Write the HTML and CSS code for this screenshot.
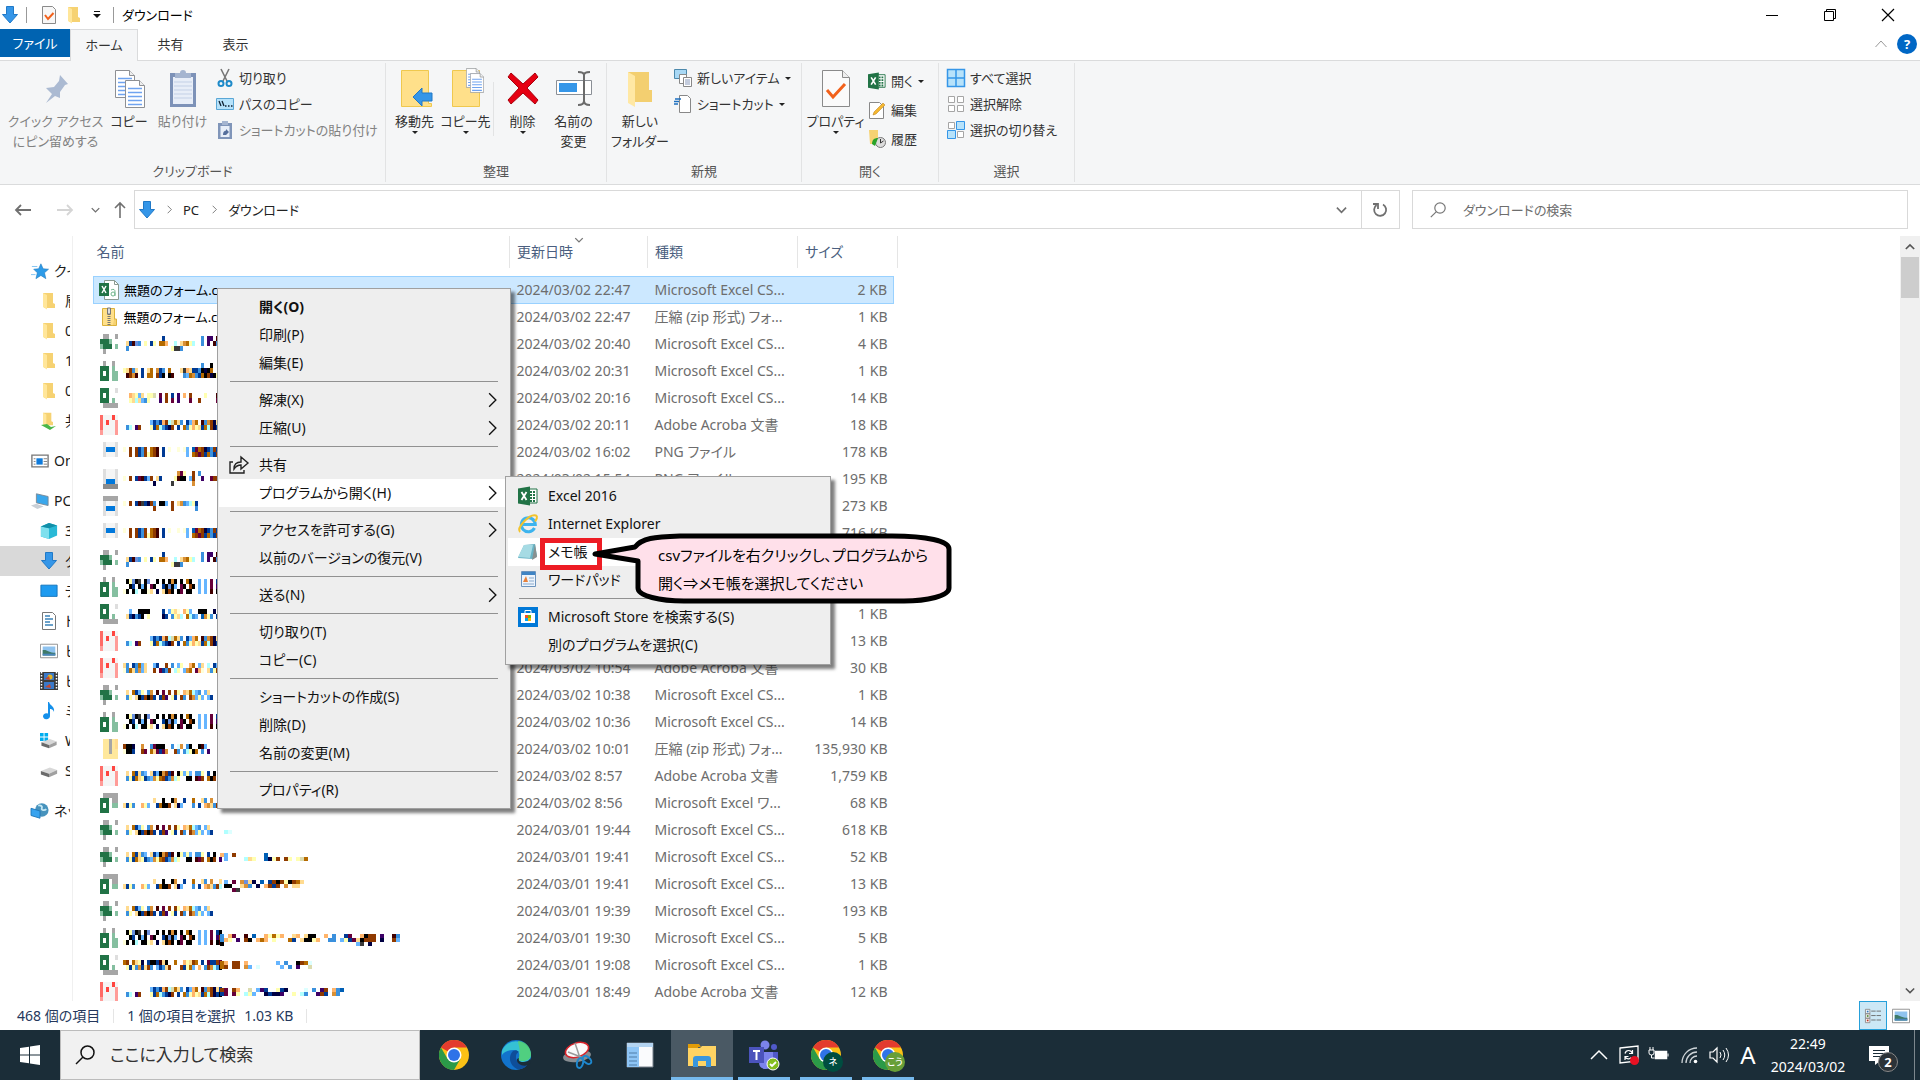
FILE: index.html
```html
<!DOCTYPE html>
<html lang="ja">
<head>
<meta charset="utf-8">
<meta name="viewport" content="width=device-width, initial-scale=1">
<title>ダウンロード</title>
<link rel="stylesheet" href="styles.css">
</head>
<body>
<svg class="defs" aria-hidden="true">
  <symbol id="i-down" viewBox="0 0 16 18"><path d="M4.5.5h7v8h4L8 17 .5 8.500h4z" fill="#3596e8" stroke="#2079c7"/></symbol>
  <symbol id="i-folder" viewBox="0 0 14 18"><path d="M1 1h10v10l2 1v4H2z" fill="#f6d272"/><path d="M1 1l4 2v14.500L1 15z" fill="#ffe69a"/></symbol>
  <symbol id="i-check" viewBox="0 0 14 18"><path d="M.5.500h10l3 3v14H.5z" fill="#f7f7f7" stroke="#8a8a8a"/><path d="M3 9l3 4 5.500-6" fill="none" stroke="#f2611b" stroke-width="2"/></symbol>
  <symbol id="i-page" viewBox="0 0 20 28"><path d="M.5.500h14l5 5v22H.5z" fill="#fff" stroke="#8e9094"/><path d="M14.500.500v5h5" fill="#eee" stroke="#8e9094"/><path d="M3 8.500h14M3 12.500h14M3 16.500h14M3 20.500h14M3 24.500h14" stroke="#6fa3f0" stroke-width="1.500"/></symbol>
  <symbol id="i-excel" viewBox="0 0 20 20"><path d="M10 3h9v14h-9z" fill="#fff" stroke="#217346"/><path d="M12 6h5M12 9h5M12 12h5M12 15h5" stroke="#217346" stroke-width="2" stroke-dasharray="2 1"/><path d="M0 2.500L12 .500v19L0 17.500z" fill="#217346"/><path d="M3.500 6l5 8M8.500 6l-5 8" stroke="#fff" stroke-width="1.800"/></symbol>
  <symbol id="i-picture" viewBox="0 0 20 16"><path d="M.5.500h19v15H.5z" fill="#fff" stroke="#8a8a8a"/><path d="M3 3h14v10H3z" fill="#8fc3ef"/><path d="M3 7c5-1 7 3 14 3v3H3z" fill="#3f7a68"/><path d="M3 11h14v2H3z" fill="#4c86bd"/></symbol>
  <symbol id="i-drive" viewBox="0 0 20 16"><path d="M1 8l10-4 8 3-9 4z" fill="#d8d8d8"/><path d="M1 8l9 3v4L1 12z" fill="#6b6b6b"/><path d="M10 11l9-4v4l-9 4z" fill="#a0a0a0"/></symbol>
  <symbol id="i-chrome" viewBox="0 0 30 30"><circle cx="15" cy="15" r="15" fill="#fbc116"/><path d="M15 15L2 7.500A15 15 0 0 1 28 7.500H15z" fill="#e33b2e"/><path d="M2 7.500A15 15 0 0 0 15 30l6.500-11.200L8.500 18.700z" fill="#2b9a48"/><circle cx="15" cy="15" r="7.500" fill="#fff"/><circle cx="15" cy="15" r="6" fill="#2f73e8"/></symbol>
  <symbol id="i-right" viewBox="0 0 8 14"><path d="M1 1l6 6-6 6" fill="none" stroke="currentColor" stroke-width="1.200"/></symbol>
  <symbol id="i-chev" viewBox="0 0 12 8"><path d="M1 1.500l5 5 5-5" fill="none" stroke="currentColor" stroke-width="1.800"/></symbol>
  <symbol id="i-caret" viewBox="0 0 6 3"><path d="M0 0h6L3 3z" fill="#222"/></symbol>
  <symbol id="i-search" viewBox="0 0 20 20"><circle cx="12.500" cy="7.500" r="6.500" fill="none" stroke="currentColor" stroke-width="1.500"/><path d="M8 12l-7 7" stroke="currentColor" stroke-width="1.500"/></symbol>
</svg>

<header class="titlebar">
  <svg class="t-down"><use href="#i-down"/></svg><i class="t-sep"></i>
  <svg class="t-check"><use href="#i-check"/></svg>
  <svg class="t-folder"><use href="#i-folder"/></svg>
  <svg class="t-more" viewBox="0 0 8 7"><path d="M1 .500h6" stroke="#111"/><path d="M0 3h8L4 7z" fill="#111"/></svg><i class="t-sep"></i>
  <h1>ダウンロード</h1>
  <div class="winbtns">
    <button aria-label="最小化"><svg viewBox="0 0 12 12"><path d="M0 6.500h12" stroke="#000"/></svg></button>
    <button aria-label="元に戻す"><svg viewBox="0 0 12 12"><path d="M.5 2.500h9v9h-9zM2.500 2.500v-2h9v9h-2" fill="none" stroke="#000"/></svg></button>
    <button aria-label="閉じる"><svg viewBox="0 0 12 12"><path d="M0 0l12 12M12 0L0 12" stroke="#000" stroke-width="1.200"/></svg></button>
  </div>
</header>

<nav class="tabs">
  <button class="file">ファイル</button><button class="on">ホーム</button><button>共有</button><button>表示</button>
  <div class="tabs-end"><svg class="up" viewBox="0 0 12 8"><path d="M.5 7L6 1l5.500 6" fill="none" stroke="#9a9a9a"/></svg><button class="help" aria-label="ヘルプ">?</button></div>
</nav>

<section class="ribbon">
  <div class="group">
    <div class="tools clip">
      <button class="big off w-pin"><svg viewBox="0 0 40 40"><path d="M24 7l8 9-3 1-5 7 0 6-5-2-9 7 6-9-6-6 8-1 5-6z" fill="#abbad2"/></svg><span>クイック アクセス<br>にピン留めする</span></button>
      <button class="big w-copy"><svg viewBox="0 0 40 40"><use href="#i-page" x="6" y="2" width="20" height="28"/><use href="#i-page" x="16" y="12" width="20" height="28"/></svg><span>コピー</span></button>
      <button class="big off w-paste"><svg viewBox="0 0 40 40"><path d="M7 5h26v34H7z" fill="#7d92b8"/><path d="M10 9h20v27H10z" fill="#e8eef8"/><path d="M11 14h18M11 18h18M11 22h18M11 26h18M11 30h18" stroke="#c3d0e6"/><path d="M12 5h5a3 3 0 0 1 6 0h5v5H12z" fill="#a5b5d0"/></svg><span>貼り付け</span></button>
      <div class="list">
        <button><svg viewBox="0 0 18 18"><path d="M5 0l6 12M13 0L7 12" stroke="#777" stroke-width="1.600"/><circle cx="5" cy="14.500" r="2.500" fill="none" stroke="#1e8ac9" stroke-width="2"/><circle cx="13" cy="14.500" r="2.500" fill="none" stroke="#1e8ac9" stroke-width="2"/></svg>切り取り</button>
        <button><svg viewBox="0 0 18 18"><path d="M.5 3.500h17v11H.5z" fill="#b7e2fa" stroke="#5aa7d6"/><path d="M3 6l2 5M6 6l2 5" stroke="#123" stroke-width="1.300"/><path d="M9 11h1.500M12 11h1.500M15 11h1.500" stroke="#123" stroke-width="1.500"/></svg>パスのコピー</button>
        <button class="off"><svg viewBox="0 0 18 18"><path d="M2 2h14v16H2z" fill="#8095b9"/><path d="M4.500 5h9v11h-9z" fill="#e8eef8"/><path d="M6 0h6v4H6z" fill="#a5b5d0"/><path d="M7 14c0-3 1-4 3-4.500V8l3 3-3 3" fill="#566f9c"/></svg>ショートカットの貼り付け</button>
      </div>
    </div>
    <h2>クリップボード</h2>
  </div>
  <div class="group">
    <div class="tools org">
      <button class="big"><svg viewBox="0 0 40 40"><path d="M6.500 2.500h27v33l3 0v3h-30z" fill="#ffe08a" stroke="#efc84e"/><path d="M18 29l9-9v5h10v8H27v5z" fill="#3596e8" stroke="#2079c7"/></svg><span>移動先</span><svg class="car"><use href="#i-caret"/></svg></button>
      <button class="big"><svg viewBox="0 0 40 40"><path d="M6.500 2.500h27v36h-27z" fill="#ffe08a" stroke="#efc84e"/><use href="#i-page" x="20" y="0" width="14" height="20"/><use href="#i-page" x="24" y="5" width="14" height="20"/></svg><span>コピー先</span><svg class="car"><use href="#i-caret"/></svg></button>
      <i class="vline"></i>
      <button class="big"><svg viewBox="0 0 40 40"><path d="M8 5l12 11L32 5l3 4-11 11 11 12-3 4-12-11L8 36l-3-4 11-12L5 9z" fill="#e60012" stroke="#a8000c"/></svg><span>削除</span><svg class="car"><use href="#i-caret"/></svg></button>
      <button class="big"><svg viewBox="0 0 40 40"><path d="M2.500 12.500h35v14h-35z" fill="#fff" stroke="#8a8f96"/><path d="M5 15h18v9H5z" fill="#3596e8"/><path d="M24 4c3 0 6 0 6 3v26c0 3-3 4-6 4M36 4c-3 0-6 0-6 3v26c0 3 3 4 6 4" fill="none" stroke="#6b6b6b" stroke-width="2"/></svg><span>名前の<br>変更</span></button>
    </div>
    <h2>整理</h2>
  </div>
  <div class="group">
    <div class="tools new">
      <button class="big"><svg viewBox="0 0 40 40"><path d="M8 4h21v18h3v12H10z" fill="#f3cf70"/><path d="M8 4l7 4v31l-7-4z" fill="#ffe8a4"/></svg><span>新しい<br>フォルダー</span></button>
      <div class="list">
        <button><svg viewBox="0 0 18 18"><path d="M.5.500h12v9H.5z" fill="#a8d8f5" stroke="#4d89ac"/><path d="M5.500 5.500h7v9h-7z" fill="#fff" stroke="#888"/><path d="M9.500 8.500h8v9h-8z" fill="#fff" stroke="#888"/><path d="M11 11h5M11 13h5M11 15h5" stroke="#89b"/></svg>新しいアイテム<svg class="car"><use href="#i-caret"/></svg></button>
        <button><svg viewBox="0 0 18 18"><path d="M5.500.500h8l3 3v14h-11z" fill="#fff" stroke="#888"/><path d="M1 4h6M0 6.500h5M0 9h4" stroke="#1c6fc0" stroke-width="1.500"/></svg>ショートカット<svg class="car"><use href="#i-caret"/></svg></button>
      </div>
    </div>
    <h2>新規</h2>
  </div>
  <div class="group">
    <div class="tools open">
      <button class="big"><svg viewBox="0 0 40 40"><path d="M6.500 2.500h20l7 7v29h-27z" fill="#fafafa" stroke="#8a8a8a"/><path d="M26.500 2.500v7h7" fill="#eee" stroke="#8a8a8a"/><path d="M11 22l6 7 12-13" fill="none" stroke="#f2611b" stroke-width="3"/></svg><span>プロパティ</span><svg class="car"><use href="#i-caret"/></svg></button>
      <div class="list wide">
        <button><svg><use href="#i-excel"/></svg>開く<svg class="car"><use href="#i-caret"/></svg></button>
        <button><svg viewBox="0 0 18 18"><path d="M1.500 1.500h10l4 4v12h-14z" fill="#fff" stroke="#888"/><path d="M5 14l1-3 9-9 2 2-9 9z" fill="#f5b830" stroke="#b77b16" stroke-width=".5"/></svg>編集</button>
        <button><svg viewBox="0 0 18 18"><path d="M1 0h9v14H2z" fill="#f6d272"/><circle cx="12.500" cy="12.500" r="5" fill="#dcdcdc" stroke="#777"/><path d="M12.500 9v4l3-2" stroke="#333" fill="none"/><path d="M4 14c0-4 2-6 6-6l-3 8z" fill="#29a329"/></svg>履歴</button>
      </div>
    </div>
    <h2>開く</h2>
  </div>
  <div class="group">
    <div class="tools sel">
      <div class="list">
        <button><svg viewBox="0 0 18 18"><path d="M.5.500h17v17H.5zM9 0v18M0 9h18" fill="#b7e2fa" stroke="#3596e8" stroke-width="1.500"/></svg>すべて選択</button>
        <button><svg viewBox="0 0 18 18"><path d="M1.500 1.500h6v6h-6zM10.500 1.500h6v6h-6zM1.500 10.500h6v6h-6zM10.500 10.500h6v6h-6z" fill="#fff" stroke="#a5a5a5"/></svg>選択解除</button>
        <button><svg viewBox="0 0 18 18"><path d="M1.500 1.500h6v6h-6zM10.500 10.500h6v6h-6z" fill="#fff" stroke="#a5a5a5"/><path d="M9.500.500h8v8h-8zM.5 9.500h8v8h-8z" fill="#b7e2fa" stroke="#3596e8"/></svg>選択の切り替え</button>
      </div>
    </div>
    <h2>選択</h2>
  </div>
</section>

<div class="address">
  <button aria-label="戻る"><svg viewBox="0 0 16 12"><path d="M16 6H1M6 1L1 6l5 5" fill="none" stroke="#707070" stroke-width="1.800"/></svg></button>
  <button aria-label="進む"><svg viewBox="0 0 16 12"><path d="M0 6h15M10 1l5 5-5 5" fill="none" stroke="#d5d5d5" stroke-width="1.800"/></svg></button>
  <button class="narrow" aria-label="最近表示した場所"><svg class="sm"><use href="#i-chev"/></svg></button>
  <button class="narrow" aria-label="上へ"><svg viewBox="0 0 12 16" class="tall"><path d="M6 16V1M1 6l5-5 5 5" fill="none" stroke="#707070" stroke-width="1.600"/></svg></button>
  <div class="path">
    <svg class="dl"><use href="#i-down"/></svg><svg class="gt"><use href="#i-right"/></svg><a href="#">PC</a><svg class="gt"><use href="#i-right"/></svg><a href="#">ダウンロード</a>
    <button class="drop" aria-label="以前の場所"><svg><use href="#i-chev"/></svg></button>
    <button class="reload" aria-label="更新"><svg viewBox="0 0 16 16"><path d="M11 2.500A6 6 0 1 1 4.500 3M1 2h5v5" fill="none" stroke="#707070" stroke-width="1.800"/></svg></button>
  </div>
  <label class="find"><svg><use href="#i-search"/></svg><input type="text" placeholder="ダウンロードの検索" aria-label="ダウンロードの検索"></label>
</div>

<main>
  <nav class="tree">
    <a href="#" class="top"><svg viewBox="0 0 20 18"><path d="M11 1l2.500 5.500 6 .5-4.500 4 1.500 6.500-5.500-3.500-5.500 3.500L7 11 3 7l5.500-.500z" fill="#2d9be8" stroke="#1a75ba" stroke-width=".6"/><path d="M1 4h6M0 13h5" stroke="#7cc1f0"/></svg>クイック アクセス</a>
    <a href="#"><svg><use href="#i-folder"/></svg>層</a>
    <a href="#"><svg><use href="#i-folder"/></svg>0</a>
    <a href="#"><svg><use href="#i-folder"/></svg>1</a>
    <a href="#"><svg><use href="#i-folder"/></svg>0</a>
    <a href="#"><svg viewBox="0 0 18 18"><use href="#i-folder" x="2" width="12" height="15"/><path d="M1 13l6-1 4 3 5-1-6 4z" fill="#49b649"/></svg>共有</a>
    <a href="#" class="top gap"><svg viewBox="0 0 20 16"><path d="M1 1.500h18v13H1z" fill="#fff" stroke="#777" stroke-width="1.500"/><path d="M6 5h7v7H6z" fill="#0f7bdc"/><path d="M3 5.500h2M3 8.500h2M3 11.500h2M14 5.500h4M14 8.500h4M14 11.500h4" stroke="#777"/></svg>OneDrive</a>
    <a href="#" class="top gap"><svg viewBox="0 0 20 18"><path d="M6 1l13 3v10L6 11z" fill="#3aa7ec" stroke="#7a8894"/><path d="M0 14l6-2 8 3-7 3z" fill="#c9cfd6"/></svg>PC</a>
    <a href="#"><svg viewBox="0 0 20 18"><path d="M1 4l9-4 9 3v11l-9 4-9-3z" fill="#29b9d6"/><path d="M1 4l9 2v12l-9-3z" fill="#7ee0ee"/><path d="M1 4l9-4 9 3-9 3z" fill="#128fa8"/></svg>3D オブジェクト</a>
    <a href="#" class="cur"><svg><use href="#i-down"/></svg>ダウンロード</a>
    <a href="#"><svg viewBox="0 0 20 16"><path d="M1 1.500h18v12.500H1z" fill="#1e9bf0" stroke="#1473b8"/></svg>デスクトップ</a>
    <a href="#"><svg viewBox="0 0 18 18"><path d="M2.500.500h10l3 3v14h-13z" fill="#fff" stroke="#777"/><path d="M5 4h5M5 7h8M5 10h5M5 13h8" stroke="#3b83b8" stroke-width="1.300"/></svg>ドキュメント</a>
    <a href="#"><svg><use href="#i-picture"/></svg>ピクチャ</a>
    <a href="#"><svg viewBox="0 0 18 18"><path d="M0 0h18v18H0z" fill="#3c3c3c"/><path d="M4 1h10v7H4zM4 10h10v7H4z" fill="#3a79c9"/><path d="M1.500 0v18M16.500 0v18" stroke="#fff" stroke-width="1.500" stroke-dasharray="1.500 1.500"/><circle cx="10" cy="5" r="2.500" fill="#e3b321"/><path d="M5 7l4-3 1 4zM5 15l5-3 1 4z" fill="#c9482b"/></svg>ビデオ</a>
    <a href="#"><svg viewBox="0 0 18 18"><path d="M9 0c1 4 6 4 5 10-1-3-3-3-4-3v7a3.500 3 0 1 1-2-2.500V0z" fill="#1590ea"/></svg>ミュージック</a>
    <a href="#"><svg viewBox="0 0 20 18"><path d="M0 0h4v4H0zM5 0h4v4H5zM0 5h4v4H0zM5 5h4v4H5z" fill="#00adef"/><use href="#i-drive" y="3" width="20" height="15"/></svg>Windows (C:)</a>
    <a href="#"><svg><use href="#i-drive"/></svg>S</a>
    <a href="#" class="top gap"><svg viewBox="0 0 20 18"><circle cx="12" cy="8" r="7.500" fill="#4793bd"/><path d="M8 3c3-1 5 1 4 3s3 3 5 1" stroke="#c4e7f3" stroke-width="2" fill="none"/><path d="M0 6l10 3v8L0 14z" fill="#38a3ef" stroke="#1d76b9"/></svg>ネットワーク</a>
  </nav>
  <div class="files">
    <table>
      <colgroup><col class="c-name"><col class="c-date"><col class="c-type"><col class="c-size"></colgroup>
      <thead><tr><th>名前</th><th class="sorted">更新日時<svg><use href="#i-chev"/></svg></th><th>種類</th><th>サイズ</th></tr></thead>
      <tbody id="rows"></tbody>
    </table>
  </div>
  <div class="scroll"><svg viewBox="0 0 12 8"><path d="M1 7l5-5 5 5" fill="none" stroke="#555" stroke-width="2"/></svg><i></i><svg class="end"><use href="#i-chev"/></svg></div>
</main>

<footer class="status"><span>468 個の項目</span><i></i><span>1 個の項目を選択</span><span class="sz">1.03 KB</span><i></i>
  <div class="views"><button class="on" aria-label="詳細"><svg viewBox="0 0 18 18"><path d="M.5 1.500h5v5h-5zM.5 6.500h5v5h-5zM.5 11.500h5v5h-5z" fill="#fff" stroke="#888"/><path d="M2 3h2v2H2z" fill="#37b"/><path d="M2 8h2v2H2z" fill="#583"/><path d="M2 13h2v2H2z" fill="#b32"/><path d="M7 3.500h5M13 3.500h5M7 8.500h5M13 8.500h5M7 13.500h5M13 13.500h5" stroke="#666"/></svg></button><button aria-label="大アイコン"><svg><use href="#i-picture"/></svg></button></div>
</footer>

<div class="taskbar">
  <button class="start" aria-label="スタート"><svg viewBox="0 0 20 20"><path d="M0 3l9-1.300V9.500H0zM10 1.500L20 0v9.500H10zM0 10.500h9v7.800L0 17zM10 10.500h10V20l-10-1.500z" fill="#fff"/></svg></button>
  <label class="tsearch"><svg><use href="#i-search"/></svg><input type="text" placeholder="ここに入力して検索" aria-label="ここに入力して検索"></label>
  <div class="apps">
    <button aria-label="Chrome"><svg><use href="#i-chrome"/></svg></button>
    <button aria-label="Edge"><svg viewBox="0 0 30 30"><circle cx="15" cy="15" r="15" fill="#1273cc"/><path d="M1 11A15 15 0 0 1 30 15c0 5-4 7-8 7s-5-2-4-4 1-8-6-8c-5 0-9 2-11 5z" fill="#35c1d4"/><path d="M17 1c8 0 13 7 13 13 0 5-4 7-8 7s-5-2-4-4c2-8-1-12-1-16z" fill="#57d26a" opacity=".8"/><path d="M12 11c-5 5-4 14 4 18 6 1 10-3 12-6-6 3-14 0-13-7 0-2 1-3 3-4-2-2-4-2-6-1z" fill="#0e4e9a"/><path d="M18 18c-1 3 1 4 4 4s6-1 7-3l1 4-3 2c-5 2-12-1-11-6z" fill="#1b2d38"/></svg></button>
    <button aria-label="Snipping Tool"><svg viewBox="0 0 30 30"><ellipse cx="14" cy="16" rx="14" ry="6" transform="rotate(-8 14 16)" fill="#888d92"/><ellipse cx="14" cy="10" rx="12" ry="7" transform="rotate(-18 14 10)" fill="#fafafa" stroke="#d8232a" stroke-width="1.500"/><path d="M12 3l5 15M5 12l13 5" stroke="#999" stroke-width="1.500"/><ellipse cx="17" cy="23" rx="3" ry="5" transform="rotate(15 17 23)" fill="none" stroke="#1e88cf" stroke-width="2"/><ellipse cx="24" cy="20" rx="3" ry="5" transform="rotate(-50 24 20)" fill="none" stroke="#1e88cf" stroke-width="2"/></svg></button>
    <button aria-label="アプリ"><svg viewBox="0 0 30 30"><path d="M2 3h26v24H2z" fill="#fafbfd" stroke="#77808a"/><path d="M2 3h26v4H2z" fill="#b4d4f1"/><path d="M2 7h12v20H2z" fill="#8ec5f6"/><path d="M4 13h8M4 17h8M4 21h8M4 25h8" stroke="#4e7da8"/></svg></button>
    <button class="run act" aria-label="エクスプローラー"><svg viewBox="0 0 30 30"><path d="M1 4h11l2 3h-3v6H1z" fill="#e09b08"/><path d="M1 8h12l2-2h14v20H1z" fill="#ffd363"/><path d="M6 27v-8q0-3 3-3h12q3 0 3 3v8h-5v-6h-8v6z" fill="#3a96dd"/></svg></button>
    <button class="run" aria-label="Teams"><svg viewBox="0 0 30 30"><circle cx="16" cy="5" r="4.500" fill="#7b83eb"/><circle cx="25" cy="7" r="3" fill="#5059c9"/><path d="M20 12h9v9q0 5-6 5z" fill="#5059c9"/><path d="M10 12h14v10q0 7-7 7t-7-7z" fill="#7b83eb"/><path d="M0 7h15v16H0z" fill="#4b53bc"/><path d="M4 11h7M7.500 11v9" stroke="#fff" stroke-width="2"/><circle cx="24" cy="24" r="6" fill="#84bd1f" stroke="#fff"/><path d="M21 24l2 2 4-4" fill="none" stroke="#fff" stroke-width="1.800"/></svg></button>
    <button class="run" aria-label="Chrome ネ"><svg><use href="#i-chrome"/></svg><b class="p1">ネ</b></button>
    <button class="run" aria-label="Chrome こう"><svg><use href="#i-chrome"/></svg><b class="p2">こう</b></button>
  </div>
  <div class="tray">
    <svg viewBox="0 0 20 20"><path d="M2 14l8-8 8 8" fill="none" stroke="#fff" stroke-width="1.500"/></svg>
    <svg viewBox="0 0 20 20"><path d="M1 3l18-2v15l-18 2z" fill="none" stroke="#fff" stroke-width="1.300"/><path d="M6 8.500c1-4 6-4 7.500 0M13.500 5v3.500H10M6 15v-3.500h3.500M6 11.500c1.500 3 5 3 6 1" fill="none" stroke="#fff" stroke-width="1.200"/><circle cx="15.500" cy="15.500" r="4.500" fill="#e81123"/></svg>
    <svg viewBox="0 0 20 20"><path d="M6.500 6.500h11v7h-11z" fill="#fff" stroke="#fff" stroke-width="1.500"/><path d="M19 8.500v3M0 5h5v3q0 2-2.500 2T0 8zM1 2v3M4 2v3M2.500 10v3h3" stroke="#fff" fill="none"/></svg>
    <svg viewBox="0 0 20 20"><g fill="none" stroke="#cfd5d9" stroke-width="1.300"><path d="M3 18A15 15 0 0 1 18 3M7 18A11 11 0 0 1 18 7M11 18a7 7 0 0 1 7-7"/></g><circle cx="16.500" cy="16.500" r="1.800" fill="#fff"/></svg>
    <svg viewBox="0 0 20 20"><path d="M1 7h3l4-4v14l-4-4H1z" fill="none" stroke="#fff" stroke-width="1.200"/><path d="M11 7q2 3 0 6M14 5q3.500 5 0 10M17 3q5 7 0 14" fill="none" stroke="#fff"/></svg>
    <span class="ime">A</span>
    <time>22:49<br>2024/03/02</time>
    <button class="note" aria-label="通知"><svg viewBox="0 0 20 20"><path d="M0 1h20v15h-9l-5 4v-4H0z" fill="#fff"/><path d="M4 5.500h12M4 8.500h12M4 11.500h12" stroke="#1b2d38"/></svg><b>2</b></button>
  </div>
  <button class="peek" aria-label="デスクトップの表示"></button>
</div>

<div class="menu ctx" role="menu">
  <button class="strong">開く(O)</button><button>印刷(P)</button><button>編集(E)</button><hr>
  <button>解凍(X)<svg><use href="#i-right"/></svg></button><button>圧縮(U)<svg><use href="#i-right"/></svg></button><hr>
  <button><svg class="lead" viewBox="0 0 20 20"><path d="M4 7H1v11h14v-3M5 14c0-5 3-7 7-7V2l7 6-7 6v-4c-3 0-5 1-7 4z" fill="none" stroke="#222" stroke-width="1.400"/></svg>共有</button>
  <button class="hot">プログラムから開く(H)<svg><use href="#i-right"/></svg></button><hr>
  <button>アクセスを許可する(G)<svg><use href="#i-right"/></svg></button><button>以前のバージョンの復元(V)</button><hr>
  <button>送る(N)<svg><use href="#i-right"/></svg></button><hr>
  <button>切り取り(T)</button><button>コピー(C)</button><hr>
  <button>ショートカットの作成(S)</button><button>削除(D)</button><button>名前の変更(M)</button><hr>
  <button>プロパティ(R)</button>
</div>

<div class="menu sub" role="menu">
  <button><svg class="lead"><use href="#i-excel"/></svg>Excel 2016</button>
  <button><svg class="lead" viewBox="0 0 20 20"><path d="M16.500 14a7 7 0 1 1 .8-3.500H5" fill="none" stroke="#3db4ee" stroke-width="3"/><path d="M2 18C-2 14 12-1 18 1.500c2 1 .5 4-1 6" fill="none" stroke="#f3c32c" stroke-width="2"/></svg>Internet Explorer</button>
  <button class="hot"><svg class="lead" viewBox="0 0 20 20"><path d="M6 3l11-1 2 12-4 3-15-1z" fill="#69b3c4"/><path d="M6 3l9 0-3 13-12-1z" fill="#a6dbe4"/><path d="M17 2l2 13-5 3z" fill="#89908f"/></svg>メモ帳</button>
  <button><svg class="lead" viewBox="0 0 20 20"><path d="M3.500 1.500h14v15h-14z" fill="#edf4fc" stroke="#6c93bd"/><path d="M4 2h13v3H4z" fill="#3f84c4"/><path d="M5 12l3-6 2 6z" fill="#e8803a"/><path d="M11 8h5M11 11h5M5 14h11" stroke="#89a9cc"/></svg>ワードパッド</button><hr>
  <button><svg class="lead" viewBox="0 0 20 20"><path d="M0 0h20v20H0z" fill="#0078d7"/><path d="M3 6h14v10H3z" fill="#fff"/><path d="M7 6V3.500h6V6" fill="none" stroke="#fff"/><path d="M7 8h3v3H7z" fill="#f25022"/><path d="M10 8h3v3h-3z" fill="#7fba00"/><path d="M7 11h3v3H7z" fill="#00a4ef"/><path d="M10 11h3v3h-3z" fill="#ffb900"/></svg>Microsoft Store を検索する(S)</button>
  <button>別のプログラムを選択(C)</button>
</div>

<div class="redbox"></div>
<div class="callout">
  <svg viewBox="0 0 360 72"><path d="M3 21L43 14C50 5 62 4 88 3H300C335 3 357 8 357 16V55C357 63 335 68 312 68H92C68 68 46 63 46 55V28z" fill="#ffe0ea" stroke="#000" stroke-width="5" stroke-linejoin="round"/></svg>
  <p>csvファイルを右クリックし、プログラムから<br>開く⇒メモ帳を選択してください</p>
</div>
<script src="script.js"></script>
</body>
</html>
```
FILE: styles.css
```css
* { box-sizing: border-box; }
body {
  margin: 0; height: 100vh; display: flex; flex-direction: column; overflow: hidden;
  background: #fff; color: #1b1b1b; position: relative;
  font: 14px/20px "Noto Sans", "Noto Sans CJK JP", sans-serif;
  font-feature-settings: "palt";
}
button, input { font: inherit; color: inherit; border: 0; background: none; padding: 0; margin: 0; font-feature-settings: inherit; }
a { color: inherit; text-decoration: none; }
svg { flex: none; display: block; overflow: visible; }
h1, h2, p { margin: 0; font-size: inherit; font-weight: 400; }
.defs { position: absolute; width: 0; height: 0; }

.titlebar { height: 29px; flex: none; display: flex; align-items: center; padding-left: 2px; }
.t-down { width: 16px; height: 18px; }
.t-sep { width: 1px; height: 16px; background: #999; margin-left: 8px; }
.t-check { width: 14px; height: 18px; margin-left: 15px; }
.t-folder { width: 14px; height: 18px; margin-left: 11px; }
.t-more { width: 8px; height: 7px; margin: 0 4px 0 12px; }
.t-more + .t-sep { margin-left: 8px; }
.titlebar h1 { margin-left: 8px; color: #000; font-size: 13px; }
.winbtns { margin-left: auto; display: flex; padding-right: 3px; }
.winbtns button { width: 58px; height: 29px; display: grid; place-items: center; }
.winbtns svg { width: 12px; height: 12px; }

.tabs { height: 32px; flex: none; display: flex; border-bottom: 1px solid #dadbdc; font-size: 13px; color: #333; }
.tabs > button { width: 65px; height: 30px; }
.tabs .file { width: 70px; height: 28px; background: #0063b1; color: #fff; }
.tabs .on { width: 68px; height: 32px; padding-bottom: 2px; background: #f5f6f7; border: 1px solid #dadbdc; border-bottom: 0; }
.tabs-end { margin-left: auto; display: flex; align-items: center; gap: 10px; padding: 0 3px 2px 0; }
.tabs-end .up { width: 12px; height: 8px; }
.help { width: 20px; height: 20px; border-radius: 50%; background: #0067c5; color: #fff; font-weight: 700; }

.ribbon { height: 124px; flex: none; display: grid; grid-template-columns: 386px 221px 195px 137px 136px; background: #f5f6f7; border-bottom: 1px solid #dadbdc; font-size: 13px; color: #333; }
.group { display: flex; flex-direction: column; justify-content: space-between; padding: 7px 0 1px; margin: 2px 0; border-right: 1px solid #e2e3e4; white-space: nowrap; }
.group h2 { text-align: center; color: #555; }
.tools { display: flex; padding-left: 8px; }
.big { width: 51px; display: flex; flex-direction: column; align-items: center; line-height: 20px; }
.big > svg { width: 40px; height: 40px; margin-top: -2px; margin-bottom: 3px; }
.big > .car { width: 6px; height: 3px; margin: 0; }
.off { color: #828282; }
.w-pin { width: 95px; }
.w-copy { width: 52px; }
.w-paste { width: 55px; margin-right: 6px; }
.list { display: flex; flex-direction: column; gap: 6px; margin-top: -2px; }
.list button { display: flex; align-items: center; gap: 5px; height: 20px; }
.list svg { width: 18px; height: 18px; }
.list .car { width: 6px; height: 3px; }
.list.wide { gap: 9px; margin-top: 1px; }
.org { padding-left: 3px; }
.vline { width: 1px; height: 54px; margin: 12px 3px 0 2px; background: #e2e3e4; }
.new { padding-left: 2px; }
.new .big { width: 62px; margin-right: 3px; }
.open { padding-left: 2px; }
.open .big { width: 63px; margin-right: 1px; }

.address { display: flex; flex: none; align-items: center; margin-top: 5px; padding-right: 12px; height: 39px; color: #222; }
.address > button { width: 38px; display: grid; place-items: center; }
.address > button:first-child { width: 46px; }
.address .narrow { width: 22px; color: #707070; }
.address .narrow + .narrow { width: 28px; }
.address button svg { width: 16px; height: 12px; }
.address button .sm { width: 9px; height: 6px; }
.address button .tall { width: 12px; height: 16px; }
.path { flex: 1; height: 39px; border: 1px solid #d9d9d9; display: flex; align-items: center; padding-left: 4px; font-size: 13px; }
.path .dl { width: 16px; height: 18px; margin-right: 12px; }
.path .gt { width: 5px; height: 9px; color: #555; margin-right: 11px; }
.path a { margin-right: 13px; }
.path button { height: 37px; display: grid; place-items: center; color: #707070; width: 38px; }
.path .drop { margin-left: auto; }
.path .drop svg { width: 11px; height: 8px; }
.path .reload { border-left: 1px solid #d9d9d9; }
.path .reload svg { height: 16px; }
.find { width: 26%; height: 39px; margin-left: 12px; border: 1px solid #d9d9d9; display: flex; align-items: center; gap: 17px; padding-left: 17px; font-size: 13px; }
.find svg { width: 16px; height: 16px; color: #777; }
.find input, .tsearch input { flex: 1; min-width: 0; outline: 0; }
input::placeholder { color: #6d6d6d; opacity: 1; }

main { flex: 1; min-height: 0; display: flex; margin-top: 7px; }
.tree { width: 73px; flex: none; overflow: hidden; border-right: 1px solid #f0f0f0; padding: 20px 2px 0 0; }
.tree a { height: 30px; display: flex; align-items: center; gap: 7px; padding-left: 40px; white-space: nowrap; overflow: hidden; }
.tree .top { padding-left: 31px; gap: 5px; }
.tree .gap { margin: 10px 0; }
.tree .gap + .gap { margin-top: 0; }
.tree .gap + a:not(.gap) { margin-top: -10px; }
.tree svg { width: 18px; height: 18px; }
.tree .cur { background: #d9d9d9; }
.files { flex: 1; min-width: 0; overflow: hidden; padding-left: 20px; }
table { border-collapse: collapse; table-layout: fixed; width: 800px; }
.c-name { width: 416px; }
.c-date { width: 138px; }
.c-type { width: 150px; }
.c-size { width: 96px; }
th { height: 32px; padding: 0 0 0 7px; text-align: left; font-weight: 400; color: #4b5f80; border-right: 1px solid #e5e5e5; }
th:first-child { padding-left: 3px; }
th:last-child { position: relative; border-right: 0; }
th:last-child::after { content: ""; position: absolute; top: 0; bottom: 0; right: -4px; width: 1px; background: #e5e5e5; }
thead::after { content: ""; display: block; height: 8px; }
.sorted { position: relative; }
.sorted svg { position: absolute; left: 64px; top: 1px; width: 10px; height: 6px; color: #777; }
td { height: 27px; padding: 0 0 0 7px; color: #6d6d6d; white-space: nowrap; line-height: 20px; }
td:first-child { padding-left: 5px; color: #000; }
td:last-child { padding: 0 6px 0 0; text-align: right; }
.name { display: flex; align-items: center; gap: 5px; height: 26px; font-size: 13px; }
.name svg { width: 20px; height: 20px; }
.name .mosaic { width: 350px; }
.name .mosaic-icon { width: 19px; }
.picked td { background: #cce8ff; border-top: 1px solid #99d1ff; border-bottom: 1px solid #99d1ff; }
.picked td:last-child { border-right: 1px solid #99d1ff; }
.picked td:first-child { border-left: 1px solid #99d1ff; }
.scroll { width: 20px; background: #f0f0f0; display: flex; flex-direction: column; align-items: center; padding: 7px 0; color: #555; }
.scroll svg { width: 10px; height: 7px; }
.scroll i { width: 18px; height: 41px; margin-top: 7px; background: #cdcdcd; }
.scroll .end { margin-top: auto; }

.status { height: 29px; flex: none; display: flex; align-items: center; padding-left: 17px; color: #25385c; }
.status i { width: 1px; height: 14px; background: #e5e5e5; margin: 0 13px; }
.status .sz { margin-left: 9px; }
.views { margin-left: auto; display: flex; align-self: stretch; padding-right: 5px; }
.views button { width: 28px; display: grid; place-items: center; }
.views .on { background: #cce8f6; border: 1px solid #26a0da; }
.views svg { width: 18px; height: 16px; }

.taskbar { height: 50px; flex: none; display: flex; background: #1b2d38; color: #fff; }
.start { width: 60px; display: grid; place-items: center; }
.start svg { width: 20px; height: 20px; }
.tsearch { width: 360px; background: #f1f1f1; border: 1px solid #bcbcbc; display: flex; align-items: center; gap: 15px; padding-left: 14px; font-size: 17px; color: #111; }
.tsearch svg { width: 20px; height: 20px; }
.tsearch input::placeholder { color: #333; }
.apps { display: flex; padding-left: 3px; }
.apps button { width: 62px; display: grid; place-items: center; position: relative; }
.apps svg { width: 30px; height: 30px; }
.run::after { content: ""; position: absolute; left: 5px; right: 5px; bottom: 0; height: 3px; background: #76b9ed; }
.act { background: #4a5964; }
.act::after { left: 0; right: 0; }
.apps b { position: absolute; left: 28px; top: 22px; width: 20px; height: 20px; border-radius: 50%; font-size: 9px; font-weight: 500; line-height: 20px; }
.p1 { background: #004d40; }
.p2 { background: #689f38; }
.tray { margin-left: auto; display: flex; align-items: center; gap: 10px; padding-right: 15px; }
.tray > svg { width: 20px; height: 20px; }
.ime { font-size: 24px; width: 18px; text-align: center; }
.tray time { line-height: 23px; width: 82px; text-align: center; }
.note { position: relative; width: 30px; height: 30px; margin-left: 10px; }
.note svg { width: 20px; height: 20px; }
.note b { position: absolute; left: 9px; top: 12px; width: 20px; height: 20px; border: 1px solid #888; border-radius: 50%; background: #2c3338; line-height: 18px; font-size: 13px; }
.peek { width: 6px; border-left: 1px solid #7d878d; }

.menu { position: absolute; background: #eee; border: 1px solid #a0a0a0; box-shadow: 4px 4px 3px rgba(0, 0, 0, .5); padding: 4px 1px; }
.ctx { left: 217px; top: 288px; width: 294px; }
.sub { left: 505px; top: 476px; width: 326px; padding: 5px 2px; }
.menu button { display: flex; align-items: center; width: 100%; height: 28px; padding: 0 12px 0 40px; color: #111; text-align: left; }
.menu button svg { width: 9px; height: 16px; margin-left: auto; }
.menu button .lead { width: 20px; height: 20px; margin: 0 10px 0 -30px; }
.menu hr { border: 0; height: 1px; background: #919191; margin: 4px 11px; }
.menu .strong { font-weight: 700; }
.menu .hot { background: #fff; }
.redbox { position: absolute; left: 540px; top: 538px; width: 62px; height: 32px; border: 5px solid #ed1c24; }
.callout { position: absolute; left: 592px; top: 533px; width: 360px; height: 72px; }
.callout svg { width: 360px; height: 72px; }
.callout p { position: absolute; left: 66px; top: 8px; font-size: 15px; line-height: 28px; color: #000; white-space: nowrap; }
```
FILE: script.js
```js
const colors = {
  k: '#000', n: '#003a94', d: '#000042', b: '#8f3a00', r: '#420000', p: '#3d0066', m: '#66003a',
  o: '#b56a00', O: '#d99036', t: '#ffb46a', l: '#3a90dd', s: '#66b5ff', c: '#b0ffff', e: '#ddffff',
  y: '#ffffd9', Y: '#ffffb0', w: '#ffdb90', g: '#dbdbb0', u: '#6a90dd', G: '#3a3a3a', a: '#005fb5',
  1: '#217346', 2: '#85bfa0', 3: '#a6a6a6', 4: '#dedede', 5: '#ff6b66', 6: '#f5f5f5', 7: '#ff4540',
  8: '#0078dc', 9: '#8c8c8c', 0: '#fff', v: '#ff9c98', z: '#ffe89c'
};

const names = {
  A: ['.............n............l.pp.r.', '.wnrul.Y.nY.oot..c.wOoYc..l.p.rl.', '.l..............YGGl.............'],
  B: ['..........................l..k...', 'Ywblw.n.wo.Onl.o...wGtwnnlkdko...', '.rbOr.n.oo.bnk.kr...lsoOlnokbdkYk'],
  C: ['..twYsw.YYg.m.b.n.p.t.b....Y...r.', '..YwcwslY...p.b.m.p...m..b.....m.'],
  D: ['.........snlntbcgowl.nsto.rlObdwn', '.lc.pb...Ynoclndb.n.olYtYwnocbdnk'],
  E: ['y.b.bnlb.obr.n.y..y.ys.amobdnlbnr', '..b.bnlbYobr.n.......s.obmbnolnbr'],
  F: ['..................OmY..b.l.......', 'y.b.nmrnsb.wn....Yrkk.sb..p..mbbt', '..........d.....G......O.........'],
  H: ['y.b.nrGndbl.kks.b.wOlscYn........', '..........b.....b.......l........'],
  I: ['.kYukG.ku..k.k.kOk.k.ok..s.s.m.nk', '..kn.ksk.mk..nkuks.mk.bk.s.s.m.pb', 'yk.kc.kkyw.d.wkbk.km.kk..s.s.r.kr'],
  J: ['..s..kkkk....n.sYwy.tYs..kkk..d.s', '.wndlnk.Y....dn.lYwc.ocls.aOYl.no'],
  K: ['wl.nlosw..sn..b.l.sY..to.sw.c.nsb', 'ylowlOsw..b.mnlb.cY.sOo.mty.wlYbc'],
  L: ['.w.onsY.lO.r.m.b.bY.twocsl.sw....', '.lY.wknbkbn.nbp.Yn.bl.bOsYs.sn...'],
  M: ['bkkd..O..lmkkk..l.eO.lk..krs.....', 'ykkn..bm.owmnmO..bl.lcYko.l.p....'],
  N: ['.w.onwls.wnskObnr.kYsYs.llY.n.k..', '.lYnowYnlsOYobnlOcY..kk.rmb.okb.p'],
  P: ['..........w..k..kO..n..o..wl.O..w', 'wnYl..tYs..nokkb.wds...l.n.tOwlbc'],
  Q: ['ob.owYd.nkknrwk..o..tYwbo.n.mnnbm', '.YnYlOnwbl.snlwb...bnYos.t.lbOclk']
};

const tails = {
  21: ['', '.ce'],
  22: ['ts.b.......a', '.s....cwY..adYb.bY.Ygo'],
  23: ['.s.m.Ouwd.a.nbkbYkbow', '.kk..wOl.d.tbnb.O.ww', '...mG'],
  25: ['l.tm..r.a..tYoYt..wt.wkk..t.l..nm..tkbb.p..rl', 'ltY.p.bk.tot.Y...on.wkkYt..ll.sYnmwkbbb.d..bs', 'k.................................sG.d'],
  26: ['ot.bb.t.......s.l..kboe', 'ob.bb.Os.e.....s.l.p..g'],
  27: ['bm.bt..g.spn..Ynd....e.l.pb.tla', 'nm.mY.cYs..dnddp..Y.cl..pbn.Ol']
};

const icons = {
  a: ['.33..3', '1112..', '2111.2', '.3....'],
  b: ['.3..3.', '111.2.', '101.22', '111.22'],
  c: ['111..4', '101...', '111.2.', '.33333'],
  d: ['.33333', '111.33', '101.22', '111...'],
  p: ['566676', '56766v', '56666v', 'v6666v'],
  g: ['.46664', '.48884', '.46664'],
  h: ['.46664', '.46664', '.48884', '.99999'],
  i: ['.33333', '.46664', '.48884', '.46664'],
  z: ['.zz3zw', '.zz3zw', '.zz3zz', '.zzzzz']
};

const CSV = 'Microsoft Excel CS...', PDF = 'Adobe Acroba 文書', PNG = 'PNG ファイル', ZIP = '圧縮 (zip 形式) フォ...';
const D2 = '2024/03/02 ', D1 = '2024/03/01 ';
const rows = [
  ['', '', D2 + '22:47', CSV, '2 KB'], ['', '', D2 + '22:47', ZIP, '1 KB'],
  ['a', 'A', D2 + '20:40', CSV, '4 KB'], ['b', 'B', D2 + '20:31', CSV, '1 KB'],
  ['c', 'C', D2 + '20:16', CSV, '14 KB'], ['p', 'D', D2 + '20:11', PDF, '18 KB'],
  ['g', 'E', D2 + '16:02', PNG, '178 KB'], ['h', 'F', D2 + '15:54', PNG, '195 KB'],
  ['i', 'H', '', '', '273 KB'], ['g', 'E', '', '', '716 KB'],
  ['a', 'A', '', '', ''], ['b', 'I', '', '', ''],
  ['c', 'J', '', '', '1 KB'], ['p', 'D', '', '', '13 KB'],
  ['p', 'K', D2 + '10:54', PDF, '30 KB'], ['a', 'L', D2 + '10:38', CSV, '1 KB'],
  ['b', 'I', D2 + '10:36', CSV, '14 KB'], ['z', 'M', D2 + '10:01', ZIP, '135,930 KB'],
  ['p', 'N', D2 + '8:57', PDF, '1,759 KB'], ['d', 'P', D2 + '8:56', 'Microsoft Excel ワ...', '68 KB'],
  ['a', 'L', D1 + '19:44', CSV, '618 KB'], ['a', 'N', D1 + '19:41', CSV, '52 KB'],
  ['d', 'P', D1 + '19:41', CSV, '13 KB'], ['a', 'L', D1 + '19:39', CSV, '193 KB'],
  ['b', 'I', D1 + '19:30', CSV, '5 KB'], ['c', 'Q', D1 + '19:08', CSV, '1 KB'],
  ['p', 'D', D1 + '18:49', PDF, '12 KB']
];

function cells(lines, x0, y0, w, h) {
  return lines.map((line, y) => [...line].map((c, x) => colors[c]
    ? `<rect x="${x0 + x * w}" y="${y0 + y * h}" width="${w}" height="${h}" fill="${colors[c]}"/>` : '').join('')).join('');
}

const csvIcon = '<svg viewBox="0 0 20 20"><path d="M5.500.500h10l4 4v15h-14z" fill="#fff" stroke="#8a9a92"/><path d="M15.500.500v4h4" fill="none" stroke="#8a9a92"/><path d="M0 3h10v13H0z" fill="#217346"/><path d="M3 6l4 7M7 6l-4 7" stroke="#fff" stroke-width="1.500"/><circle cx="14" cy="14" r="2" fill="none" stroke="#6fb58b"/><path d="M12 10q4-2 4 2v4" fill="none" stroke="#6fb58b"/></svg>';
const zipIcon = '<svg viewBox="0 0 20 20"><path d="M3.500 1.500h12v17h-12z" fill="#ffe08a" stroke="#dbb23c"/><path d="M15.500 12h2v6.500h-4" fill="#f6d272" stroke="#dbb23c"/><path d="M10 1v17" stroke="#777" stroke-width="3" stroke-dasharray="1 1"/><path d="M8.500 1h3v6h-3z" fill="#ddd" stroke="#777"/></svg>';

document.getElementById('rows').innerHTML = rows.map((r, i) => {
  let name;
  if (i < 2) {
    name = (i ? zipIcon : csvIcon) + '無題のフォーム.csv';
  } else {
    const body = cells(names[r[1]], 0, names[r[1]].length === 3 ? 2 : 5, 3, 5) + cells(tails[i + 1] || [], 97, 6, 4, 4);
    name = `<svg class="mosaic-icon" shape-rendering="crispEdges">${cells(icons[r[0]], 1, 0, 3, 5)}</svg><svg class="mosaic" shape-rendering="crispEdges">${body}</svg>`;
  }
  return `<tr class="${i ? '' : 'picked'}"><td><div class="name">${name}</div></td><td>${r[2]}</td><td>${r[3]}</td><td>${r[4]}</td></tr>`;
}).join('');
```
